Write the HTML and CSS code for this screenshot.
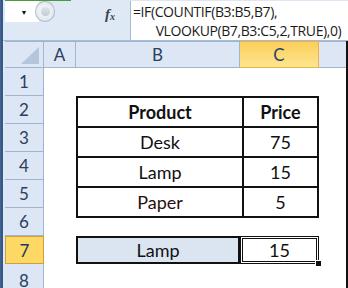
FILE: index.html
```html
<!DOCTYPE html>
<html lang="en">
<head>
  <meta charset="UTF-8" />
  <title>Excel - VLOOKUP with COUNTIF</title>
  <link rel="stylesheet" href="styles.css">
</head>
<body>
  <div class="window">
    <div class="edge"></div>
    <div class="main">
      <div class="topline"><span class="ribbon-tab"></span></div>

      <div class="fbar">
        <div class="fbar-left">
          <div class="namebox"><span class="drop">&#9660;</span></div>
          <div class="knob"><span class="knob-dot"></span></div>
          <div class="fx">f<sub>x</sub></div>
        </div>
        <div class="formula">=IF(COUNTIF(B3:B5,B7),
       VLOOKUP(B7,B3:C5,2,TRUE),0)</div>
      </div>
      <div class="fbar-gap"></div>

      <div class="sheet">
        <!-- header row -->
        <div class="hd corner"><span class="corner-tri"></span></div>
        <div class="hd col">A</div>
        <div class="hd col">B</div>
        <div class="hd col active">C</div>
        <div class="hd col last"></div>

        <!-- row headers -->
        <div class="hd row r1">1</div>
        <div class="hd row r2">2</div>
        <div class="hd row r3">3</div>
        <div class="hd row r4">4</div>
        <div class="hd row r5">5</div>
        <div class="hd row r6">6</div>
        <div class="hd row r7 active">7</div>
        <div class="hd row r8">8</div>

        <table class="data">
          <tr><th>Product</th><th>Price</th></tr>
          <tr><td>Desk</td><td>75</td></tr>
          <tr><td>Lamp</td><td>15</td></tr>
          <tr><td class="red">Paper</td><td>5</td></tr>
        </table>

        <div class="cell lookup">Lamp</div>
        <div class="cell result">15<span class="handle"></span></div>
      </div>
    </div>
  </div>
</body>
</html>
```

FILE: styles.css
```css
body {
  margin: 0;
  width: 348px;
  height: 288px;
  overflow: hidden;
  background: #fff;
  font-family: Lato, "Liberation Sans", sans-serif;
}

.window {
  display: flex;
  height: 288px;
}

.edge {
  width: 4px;
  border-left: 1px solid #56606e;
  background: #2a5a9c;
}

.main {
  flex: 1;
  background: #dfe9f5;
  display: flex;
  flex-direction: column;
}

.topline {
  height: 4px;
  padding-left: 2px;
  background: #dde7f3;
}

.ribbon-tab {
  display: block;
  width: 66px;
  height: 1px;
  background: #4c9a3c;
}

/* formula bar */
.fbar {
  display: flex;
  height: 40px;
}

.fbar-left {
  width: 125px;
  display: flex;
  align-items: flex-start;
  padding-left: 2px;
}

.namebox {
  width: 34px;
  height: 21px;
  background: #fff;
  display: flex;
  align-items: center;
  justify-content: center;
  padding-left: 4px;
  box-sizing: border-box;
}

.drop {
  font-size: 7px;
  color: #111;
}

.knob {
  width: 20px;
  height: 21px;
  margin-left: -4px;
  border-radius: 50%;
  border: 1px solid #a9bcd4;
  box-sizing: border-box;
  background: radial-gradient(circle at 45% 45%, #f7f9fb 0, #e4e9ef 70%, #d3dbe5 100%);
  display: flex;
  align-items: center;
  justify-content: center;
}

.knob-dot {
  width: 9px;
  height: 9px;
  border-radius: 50%;
  background: linear-gradient(#dfe3e8, #c4cbd4);
}

.fx {
  margin-left: auto;
  margin-right: 15px;
  margin-top: 6px;
  font-family: "Liberation Serif", serif;
  font-style: italic;
  font-weight: bold;
  font-size: 15px;
  color: #3b4250;
  line-height: 14px;
}

.fx sub {
  font-size: 10px;
  vertical-align: -1px;
}

.formula {
  flex: 1;
  background: #fff;
  border-left: 1px solid #a7bad2;
  padding: 1px 0 0 2px;
  white-space: pre;
  font-family: "Open Sans", sans-serif;
  font-size: 14px;
  line-height: 19px;
  color: #1b1b1b;
  letter-spacing: -0.4px;
}

.fbar-gap {
  height: 5px;
  border-top: 1px solid #a9bbd0;
  background: #e5edf7;
}

/* sheet grid */
.sheet {
  margin-left: 2px;
  width: 341px;
  flex: 1;
  background: #fff;
  border-right: 2px solid #111;
  border-bottom: 2px solid #111;
  display: grid;
  grid-template-columns: 39px 32px 164px 79px 1fr;
  grid-template-rows: 27px repeat(7, 28px) 1fr;
}

.hd {
  background: #dce6f4;
  border-right: 1px solid #9eb6ce;
  border-bottom: 1px solid #9eb6ce;
  display: flex;
  align-items: center;
  justify-content: center;
  font-size: 17px;
  color: #2a3f5e;
  box-sizing: border-box;
}

.hd.col {
  border-top: 1px solid #9eb6ce;
}

.hd.col.last {
  border-right: none;
}

.corner {
  border-top: 1px solid #9eb6ce;
  position: relative;
}

.corner-tri {
  position: absolute;
  right: 4px;
  bottom: 3px;
  width: 0;
  height: 0;
  border-left: 18px solid transparent;
  border-bottom: 17px solid #b5c6dc;
}

.hd.row {
  grid-column: 1;
}

.r1 { grid-row: 2; }
.r2 { grid-row: 3; }
.r3 { grid-row: 4; }
.r4 { grid-row: 5; }
.r5 { grid-row: 6; }
.r6 { grid-row: 7; }
.r7 { grid-row: 8; }
.r8 { grid-row: 9; align-items: flex-start; padding-top: 6px; }

.hd.col.active {
  background: linear-gradient(#fbcf5a, #fde58f);
  border-color: #eeb24a;
  color: #2a3f66;
}

.hd.row.active {
  background: #fdd865;
  border: 1px solid #d39c3d;
  color: #22385a;
}

/* product table */
.data {
  grid-column: 3 / 5;
  grid-row: 3 / 7;
  width: 100%;
  height: 100%;
  border-collapse: collapse;
  font-size: 18px;
  color: #111;
}

.data th,
.data td {
  border: 2px solid #111;
  padding: 0;
  text-align: center;
  height: 28px;
}

.data th {
  font-weight: bold;
}

.data td:first-child,
.data th:first-child {
  width: 164px;
}

.red {
  color: #2a0d0d;
}

.cell {
  grid-row: 8;
  display: flex;
  align-items: center;
  justify-content: center;
  font-size: 18px;
  color: #111;
  box-sizing: border-box;
}

.lookup {
  grid-column: 3;
  background: #dbe5f1;
  border: 2px solid #111;
}

.result {
  grid-column: 4;
  border: 1px solid #111;
  box-shadow: inset 0 0 0 1px #fff, inset 0 0 0 2px #111;
  position: relative;
}

.handle {
  position: absolute;
  right: -3px;
  bottom: -3px;
  width: 5px;
  height: 5px;
  background: #111;
  border: 1px solid #fff;
  border-right: none;
  border-bottom: none;
}
```
